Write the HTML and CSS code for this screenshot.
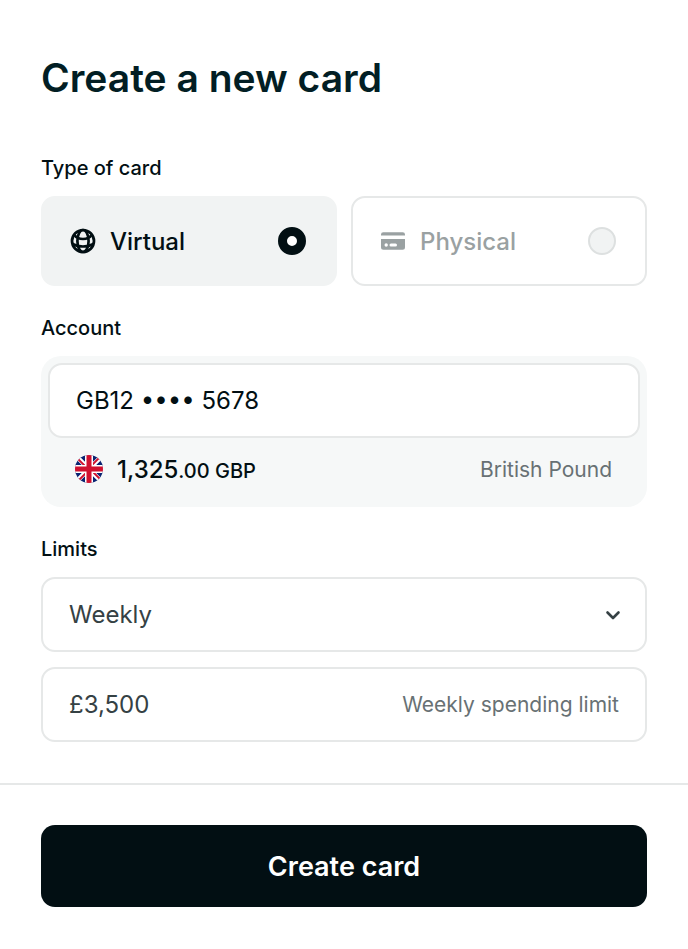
FILE: index.html
```html
<!DOCTYPE html>
<html lang="en">
<head>
    <meta charset="UTF-8">
    <meta name="viewport" content="width=device-width, initial-scale=1.0">
    <title>Create a new card</title>
    <link rel="stylesheet" href="styles.css">
</head>
<body>
    <form class="card-form">
        <main class="content">
            <h1 class="title">Create a new card</h1>

            <fieldset class="group">
                <legend class="label">Type of card</legend>
                <div class="types">
                    <label class="type">
                        <svg class="type-icon" viewBox="0 0 26 26" fill="none" stroke="currentColor" stroke-width="2.7">
                            <circle cx="13" cy="13" r="11"/>
                            <ellipse cx="13" cy="13" rx="5.6" ry="11"/>
                            <path d="M4 6.8c2 2.7 5.200 4.200 9 4.200s7-1.500 9-4.200M2.500 15.800c3 1.900 6.400 2.700 10.500 2.700s7.500-.8 10.500-2.700"/>
                        </svg>
                        <span class="type-name">Virtual</span>
                        <input class="radio" type="radio" name="type" value="virtual" checked>
                    </label>
                    <label class="type">
                        <svg class="type-icon" viewBox="0 0 26 26" fill="currentColor">
                            <path d="M1 7.500V6.500a2.300 2.300 0 0 1 2.300-2.300h19.400a2.300 2.300 0 0 1 2.300 2.300v1z"/>
                            <path fill-rule="evenodd" d="M1 11h24v8.200a2.500 2.500 0 0 1-2.500 2.500h-19a2.500 2.500 0 0 1-2.500-2.500zM6.200 15.300a1.700 1.700 0 0 0 0 3.400 1.700 1.700 0 0 0 0-3.400zM11 15.500a1.500 1.500 0 0 0 0 3h4.500a1.500 1.500 0 0 0 0-3z"/>
                        </svg>
                        <span class="type-name">Physical</span>
                        <input class="radio" type="radio" name="type" value="physical">
                    </label>
                </div>
            </fieldset>

            <div class="group">
                <label class="label" for="account">Account</label>
                <div class="account">
                    <input class="field account-number" id="account" type="text" value="GB12 •••• 5678">
                    <div class="balance">
                        <svg class="flag" viewBox="0 0 28 28">
                            <clipPath id="round"><circle cx="14" cy="14" r="14"/></clipPath>
                            <g clip-path="url(#round)">
                                <path fill="#0a2472" d="M0 0h28v28H0z"/>
                                <path stroke="#fff" stroke-width="4.500" d="M0 0l28 28M28 0L0 28"/>
                                <path stroke="#d0112f" stroke-width="1.800" d="M1 2l12 12M27 26L15 14M26 1L14 13M2 27l12-12"/>
                                <path stroke="#fff" stroke-width="8" d="M14 0v28M0 14h28"/>
                                <path stroke="#d0112f" stroke-width="5" d="M14 0v28M0 14h28"/>
                            </g>
                        </svg>
                        <span class="amount">1,325<span class="cents">.00 GBP</span></span>
                        <span class="hint">British Pound</span>
                    </div>
                </div>
            </div>

            <div class="group">
                <label class="label" for="period">Limits</label>
                <div class="limits">
                    <div class="select">
                        <select class="field" id="period">
                            <option>Weekly</option>
                        </select>
                        <svg class="chevron" viewBox="0 0 16 16" fill="none" stroke="currentColor" stroke-width="2.600" stroke-linecap="round" stroke-linejoin="round">
                            <path d="M2.500 5.500L8 11l5.500-5.500"/>
                        </svg>
                    </div>
                    <div class="field limit">
                        <input class="limit-input" id="limit" type="text" value="£3,500">
                        <label class="hint" for="limit">Weekly spending limit</label>
                    </div>
                </div>
            </div>
        </main>

        <footer class="footer">
            <button class="submit" type="submit">Create card</button>
        </footer>
    </form>
</body>
</html>
```

FILE: styles.css
```css
*{
    box-sizing: border-box;
    margin: 0;
    padding: 0;
}
body{
    background: #fff;
    color: #020f13;
    font-family: Inter, "Liberation Sans", sans-serif;
}
input,
select,
button{
    font: inherit;
    color: inherit;
}
.content{
    display: flex;
    flex-direction: column;
    gap: 30px;
    padding: 53px 41px 41px;
}
.title{
    margin-bottom: 23px;
    color: #021e24;
    font-size: 39px;
    font-weight: 600;
    line-height: 50px;
}
.group{
    min-width: 0;
    border: 0;
}
.label{
    display: block;
    margin-bottom: 16px;
    font-size: 20px;
    font-weight: 500;
    line-height: 24px;
}

/* card type */
.types{
    display: grid;
    grid-template-columns: 1fr 1fr;
    gap: 14px;
}
.type{
    display: flex;
    align-items: center;
    gap: 14px;
    height: 90px;
    padding: 0 29px 0 27px;
    border: 2px solid #e6e8e8;
    border-radius: 14px;
    color: #9aa1a2;
    font-size: 24px;
    font-weight: 500;
    cursor: pointer;
}
.type:has(:checked){
    border-color: #f1f3f3;
    background: #f1f3f3;
    color: #020f13;
}
.type-icon{
    width: 26px;
    height: 26px;
}
.type-name{
    flex: 1;
}
.radio{
    appearance: none;
    width: 28px;
    height: 28px;
    border: 2px solid #dde0e0;
    border-radius: 50%;
    background: #f1f3f3;
}
.radio:checked{
    border: 9px solid #020f13;
    background: #fff;
}

/* fields */
.field{
    display: block;
    width: 100%;
    height: 75px;
    padding: 0 26px;
    border: 2px solid #e6e8e8;
    border-radius: 14px;
    background: #fff;
    color: #354144;
    font-size: 24px;
}
.account{
    padding: 7px;
    border-radius: 20px;
    background: #f6f8f8;
}
.account-number{
    color: #020f13;
}
.balance{
    display: flex;
    align-items: center;
    height: 62px;
    padding: 0 28px 0 27px;
}
.flag{
    width: 28px;
    height: 28px;
    margin-right: 14px;
}
.amount{
    flex: 1;
    font-size: 24px;
    font-weight: 500;
}
.cents{
    font-size: 20px;
}
.hint{
    color: #687174;
    font-size: 21px;
}
.limits{
    display: grid;
    gap: 15px;
}
.select{
    position: relative;
}
.select .field{
    appearance: none;
}
.chevron{
    position: absolute;
    top: 50%;
    right: 26px;
    width: 16px;
    height: 16px;
    margin-top: -8px;
    color: #354144;
    pointer-events: none;
}
.limit{
    display: flex;
    align-items: center;
}
.limit-input{
    flex: 1;
    min-width: 0;
    border: 0;
    outline: 0;
    background: none;
}

/* footer */
.footer{
    padding: 40px 41px 42px;
    border-top: 2px solid #e6e8e8;
}
.submit{
    display: block;
    width: 100%;
    height: 82px;
    border: 0;
    border-radius: 14px;
    background: #020f13;
    color: #fff;
    font-size: 27px;
    font-weight: 600;
    cursor: pointer;
}
```
